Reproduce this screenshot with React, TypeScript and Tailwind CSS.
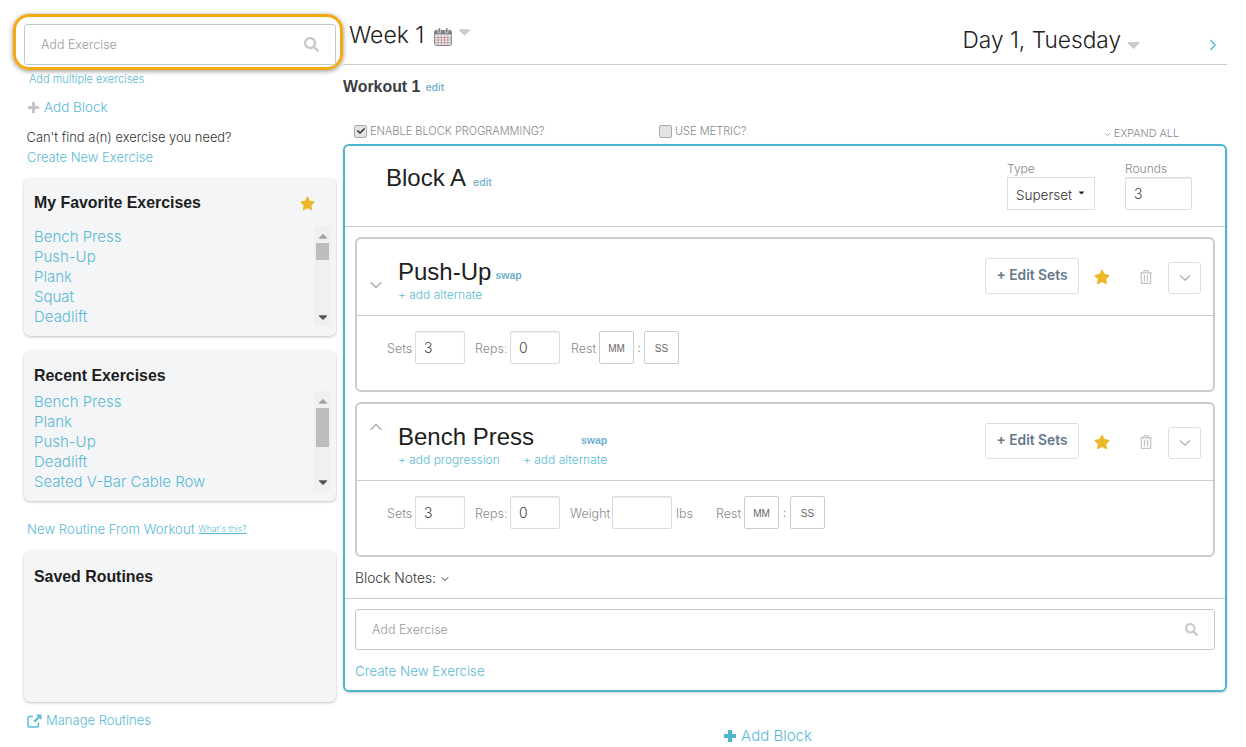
import React from "react";
import { FaStar, FaSearch, FaCheck, FaRegTrashAlt, FaCaretDown, FaCaretUp } from "react-icons/fa";
import { LuChevronDown, LuChevronUp, LuChevronRight } from "react-icons/lu";

const sans = "font-['Inter','Liberation_Sans',sans-serif]";
const helv = "font-['Liberation_Sans',sans-serif]";
const bold = "font-['Liberation_Sans',sans-serif] font-bold";

function Calendar() {
  return (
    <svg width="18" height="18" viewBox="0 0 18 18" className="text-[#7d8087]">
      <rect x="0.7" y="2.5" width="16.6" height="15" rx="1.5" fill="#f1eeee" stroke="currentColor" />
      <rect x="0.7" y="2.5" width="16.6" height="4" fill="currentColor" />
      <rect x="4" y="0" width="2.6" height="5" rx="1" fill="currentColor" stroke="#fff" strokeWidth="0.6" />
      <rect x="11.4" y="0" width="2.6" height="5" rx="1" fill="currentColor" stroke="#fff" strokeWidth="0.6" />
      <path d="M1 9.5H17M1 12H17M1 14.7H17M4.2 7V17M7.4 7V17M10.6 7V17M13.8 7V17" stroke="#b88f8f" strokeWidth="0.8" />
    </svg>
  );
}

function ExternalLink() {
  return (
    <svg width="15" height="14" viewBox="0 0 15 14" className="text-[#5ab9d4]">
      <path d="M6 2.5H2.5A1.5 1.5 0 0 0 1 4V11.5A1.5 1.5 0 0 0 2.5 13H10A1.5 1.5 0 0 0 11.5 11.5V8.5" fill="none" stroke="currentColor" strokeWidth="1.5" />
      <path d="M9 0.5H14.5V6L12.5 4L8 8.5L6.5 7L11 2.5Z" fill="currentColor" />
    </svg>
  );
}

function Plus({ size, bar, color }: { size: number; bar: number; color: string }) {
  const m = (size - bar) / 2;
  return (
    <svg width={size} height={size} viewBox={`0 0 ${size} ${size}`} className={color}>
      <rect x={m} y="0" width={bar} height={size} rx="0.5" fill="currentColor" />
      <rect x="0" y={m} width={size} height={bar} rx="0.5" fill="currentColor" />
    </svg>
  );
}

function Scrollbar({ thumb }: { thumb: string }) {
  return (
    <div className="w-[17px] h-[100px] bg-[#f0f0f1] flex flex-col items-center shrink-0">
      <FaCaretUp className="text-[#a3a3a3] text-[12px] mt-[3px] h-[14px]" />
      <div className={"w-[13px] bg-[#bdbdbd] " + thumb} />
      <div className="flex-1" />
      <FaCaretDown className="text-[#555] text-[12px] mb-[2px] h-[14px]" />
    </div>
  );
}

function ListCard({ title, items, thumb, star, gap }: { title: string; items: string[]; thumb: string; star?: boolean; gap: string }) {
  return (
    <div className="h-full rounded-[6px] bg-[#f4f5f7] shadow-[0_1px_3px_rgba(0,0,0,0.25)] pt-[14px] pl-[10px] pr-[5px]">
      <div className="flex items-center h-[22px] justify-between pr-[16px]">
        <span className={bold + " text-[15.9px] text-[#1d1d20]"}>{title}</span>
        {star && <FaStar className="text-[#ecb827] text-[15px]" />}
      </div>
      <div className={"flex justify-between " + gap}>
        <div className={sans + " font-light text-[15px] leading-[20px] text-[#5ab9d4] pt-[1px]"}>
          {items.map((i) => (
            <div key={i}>{i}</div>
          ))}
        </div>
        <Scrollbar thumb={thumb} />
      </div>
    </div>
  );
}

function TimeBox({ t }: { t: string }) {
  return (
    <div className={helv + " w-[35px] h-[33px] border border-[#ccc] rounded-[2px] flex items-center justify-center text-[10px] text-[#666] pt-[1px]"}>
      {t}
    </div>
  );
}

function NumBox({ v, w }: { v?: string; w: string }) {
  return (
    <div className={"h-[33px] border border-[#dcdcdc] rounded-[2px] shadow-[inset_0_1px_1px_rgba(0,0,0,0.08)] pl-[8px] flex items-center text-[14px] font-light text-[#444] " + w}>
      {v}
    </div>
  );
}

function Label({ children, w }: { children: React.ReactNode; w: string }) {
  return <span className={"text-[12.5px] font-light text-[#8a8a8a] mt-[3px] " + w}>{children}</span>;
}

function ExerciseCard({ title, swap, links, open, weight }: { title: string; swap: string; links: string[]; open?: boolean; weight?: boolean }) {
  return (
    <div className="mx-[10px] h-[155px] border-2 border-[#ccc] rounded-[6px]">
      <div className="h-[77px] border-b border-[#ccc] flex relative">
        <div className={"w-[41px] pl-[9px] " + (open ? "pt-[13px]" : "pt-[36px]")}>
          {open ? (
            <LuChevronUp strokeWidth={1.5} className="text-[#aaa] text-[20px]" />
          ) : (
            <LuChevronDown strokeWidth={1.5} className="text-[#aaa] text-[20px]" />
          )}
        </div>
        <div className="flex-1 pt-[19px]">
          <div className="h-[28px] flex items-center">
            <span className={helv + " text-[24px] text-[#1d1d20] " + (open ? "w-[183px]" : "mr-[4px]")}>{title}</span>
            <span className={bold + " text-[10.5px] text-[#6fb0cd] mt-[7px]"}>{swap}</span>
          </div>
          <div className="flex text-[12px] font-light text-[#5ab9d4] leading-[16px] mt-[1px]">
            {links.map((l, i) => (
              <span key={l} className={i === 0 && links.length > 1 ? "w-[125px]" : ""}>{l}</span>
            ))}
          </div>
        </div>
        <div className="flex items-start pt-[19px] pr-[12px]">
          <div className="w-[94px] h-[36px] border border-[#ddd] rounded-[3px] flex items-center justify-center pb-[2px] text-[13.8px] font-semibold text-[#66788a]">+ Edit Sets</div>
          <FaStar className="text-[#ecb827] text-[16px] ml-[15px] mt-[11px]" />
          <FaRegTrashAlt className="text-[#c4c4c4] text-[14px] ml-[29px] mt-[12px]" />
          <div className="w-[33px] h-[32px] border border-[#ddd] rounded-[3px] ml-[15px] mt-[4px] flex items-center justify-center">
            <LuChevronDown strokeWidth={1.5} className="text-[#a9aeb5] text-[18px]" />
          </div>
        </div>
      </div>
      <div className="flex items-center pl-[30px] pt-[15px]">
        <Label w="w-[28px]">Sets</Label>
        <NumBox v="3" w="w-[50px]" />
        <Label w="w-[35px] ml-[10px]">Reps:</Label>
        <NumBox v="0" w="w-[50px]" />
        {weight && (
          <>
            <Label w="w-[42px] ml-[10px]">Weight</Label>
            <NumBox w="w-[60px]" />
            <Label w="w-[29px] ml-[4px]">lbs</Label>
          </>
        )}
        <Label w="w-[28px] ml-[11px]">Rest</Label>
        <TimeBox t="MM" />
        <span className={"text-[12px] text-[#999] text-center " + (weight ? "w-[11px]" : "w-[10px]")}>:</span>
        <TimeBox t="SS" />
      </div>
    </div>
  );
}

function SearchBox({ icon }: { icon: string }) {
  return (
    <div className="h-[41px] border border-[#c8c8c8] rounded-[3px] flex items-center justify-between bg-white pl-[16px] pr-[16px]">
      <span className="text-[12.5px] font-light text-[#9a9a9a] pt-[2px]">Add Exercise</span>
      <FaSearch className={"text-[#c9c9c9] " + icon} />
    </div>
  );
}

export default function App() {
  return (
    <div className={sans + " w-[1246px] h-[747px] overflow-hidden bg-white flex text-[#333]"}>
      <aside className="w-[312px] ml-[24px] pt-[24px] shrink-0 relative">
        <SearchBox icon="text-[15px]" />
        <div className="absolute left-[-11px] top-[14px] w-[330px] h-[56px] border-[3px] border-[#f5a90f] rounded-[16px] shadow-[0_1px_5px_rgba(0,0,0,0.45)]" />
        <div className="mt-[6px] ml-[5px] text-[11px] leading-[16px] font-light text-[#5ab9d4]">Add multiple exercises</div>
        <div className="mt-[10px] ml-[4px] flex items-center gap-[5px] h-[20px] text-[13.5px] font-light text-[#5ab9d4]">
          <Plus size={11} bar={3} color="text-[#c4c4c4]" />
          Add Block
        </div>
        <div className="mt-[10px] ml-[2.5px] pt-[1px] h-[20px] text-[12.9px] leading-[20px] font-light text-[#333]">Can't find a(n) exercise you need?</div>
        <div className="ml-[3px] text-[13px] leading-[20px] font-light text-[#5ab9d4]">Create New Exercise</div>
        <div className="mt-[11px] h-[158px]">
          <ListCard title="My Favorite Exercises" star gap="mt-[12px]" thumb="h-[17px]" items={["Bench Press", "Push-Up", "Plank", "Squat", "Deadlift"]} />
        </div>
        <div className="mt-[15px] h-[150px]">
          <ListCard title="Recent Exercises" gap="mt-[4px]" thumb="h-[39px]" items={["Bench Press", "Plank", "Push-Up", "Deadlift", "Seated V-Bar Cable Row"]} />
        </div>
        <div className="mt-[18px] ml-[3px] h-[20px] pt-[1px] flex items-center gap-[4px] text-[#5ab9d4] font-light">
          <span className="text-[13.2px]">New Routine From Workout</span>
          <span className="text-[8.5px] underline">What's this?</span>
        </div>
        <div className="mt-[12px] h-[151px] rounded-[6px] bg-[#f4f5f7] shadow-[0_1px_3px_rgba(0,0,0,0.25)] pt-[15px] pl-[10px]">
          <div className={bold + " text-[15.9px] leading-[22px] text-[#1d1d20]"}>Saved Routines</div>
        </div>
        <div className="mt-[8px] ml-[3px] h-[20px] pt-[1px] flex items-center gap-[4px] text-[13px] font-light text-[#5ab9d4]">
          <ExternalLink />
          Manage Routines
        </div>
      </aside>

      <main className="w-[884px] ml-[7px] shrink-0">
        <header className="h-[65px] border-b border-[#ccc] flex">
          <div className="flex items-start pl-[6px] pt-[21px]">
            <span className="text-[23px] font-light leading-[28px] text-[#222]">Week 1</span>
            <span className="pt-[7px] ml-[10px]"><Calendar /></span>
            <FaCaretDown className="text-[#c8ccd0] text-[19px] ml-[3px] mt-[1px]" />
          </div>
          <div className="flex-1" />
          <div className="flex items-start pt-[26px]">
            <span className="text-[22.7px] font-light leading-[28px] text-[#222]">Day 1, Tuesday</span>
            <FaCaretDown className="text-[#c8ccd0] text-[21px] mt-[8px] ml-[2px]" />
            <LuChevronRight strokeWidth={1.8} className="text-[#5ab9d4] text-[18px] ml-[60px] mt-[10px] mr-[5px]" />
          </div>
        </header>
        <div className="mt-[12px] h-[20px] flex items-center gap-[5px]">
          <span className={bold + " text-[15.9px] text-[#3c3c40]"}>Workout 1</span>
          <span className="text-[10.5px] font-medium text-[#6fb0cd] mt-[2px]">edit</span>
        </div>
        <div className="mt-[26px] h-[16px] flex items-center text-[11px] font-light text-[#888] relative">
          <div className="ml-[11px] w-[13px] h-[13px] bg-[#e3e3e3] border border-[#aaa] rounded-[2px] flex items-center justify-center">
            <FaCheck className="text-[#333] text-[8px]" />
          </div>
          <span className="ml-[3px] w-[289px]">ENABLE BLOCK PROGRAMMING?</span>
          <div className="w-[13px] h-[13px] bg-[#e3e3e3] border border-[#aaa] rounded-[2px]" />
          <span className="ml-[3px]">USE METRIC?</span>
          <div className="flex-1" />
          <span className="flex items-center gap-[2px] mr-[48px] mt-[6px] text-[10.8px]">
            <LuChevronDown className="text-[9px]" />
            EXPAND ALL
          </span>
        </div>

        <section className="mt-[5px] border-2 border-[#4fb5cc] rounded-[6px] shadow-[0_1px_2px_rgba(0,0,0,0.2)]">
          <div className="h-[81px] border-b border-[#ccc] flex relative">
            <div className="pl-[41px] pt-[18px] flex items-start gap-[7px] flex-1">
              <span className={helv + " text-[24px] leading-[28px] text-[#222]"}>Block A</span>
              <span className="text-[10.5px] font-medium text-[#6fb0cd] mt-[11px]">edit</span>
            </div>
            <div className="pt-[16px]">
              <div className="text-[12px] leading-[14px] font-light text-[#888] mb-[1px]">Type</div>
              <div className="w-[88px] h-[33px] border border-[#ddd] flex items-center pl-[8px] pt-[3px] text-[13.5px] font-light text-[#333] gap-[5px]">
                Superset
                <FaCaretDown className="text-[#222] text-[9px] mb-[5px]" />
              </div>
            </div>
            <div className="pt-[16px] ml-[30px] mr-[33px]">
              <div className="text-[12px] leading-[14px] font-light text-[#888] mb-[1px]">Rounds</div>
              <NumBox v="3" w="w-[67px]" />
            </div>
          </div>

          <div className="mt-[10px] flex flex-col gap-[10px]">
            <ExerciseCard title="Push-Up" swap="swap" links={["+ add alternate"]} />
            <ExerciseCard title="Bench Press" swap="swap" links={["+ add progression", "+ add alternate"]} open weight />
          </div>

          <div className="mt-[11px] ml-[10px] h-[20px] pt-[1px] flex items-center gap-[3px] text-[13.8px] font-light text-[#333]">
            Block Notes:
            <LuChevronDown className="text-[12px]" />
          </div>
          <div className="mt-[10px] border-t border-[#ccc] pt-[10px] px-[10px]">
            <SearchBox icon="text-[13px]" />
          </div>
          <div className="mt-[11px] ml-[10px] mb-[9px] text-[13.4px] leading-[20px] font-light text-[#5ab9d4]">Create New Exercise</div>
        </section>

        <div className="mt-[33px] flex items-center justify-center gap-[5px] text-[15px] font-light text-[#5ab9d4] pr-[34px]">
          <Plus size={12} bar={4} color="text-[#4fb5cc]" />
          Add Block
        </div>
      </main>
    </div>
  );
}
